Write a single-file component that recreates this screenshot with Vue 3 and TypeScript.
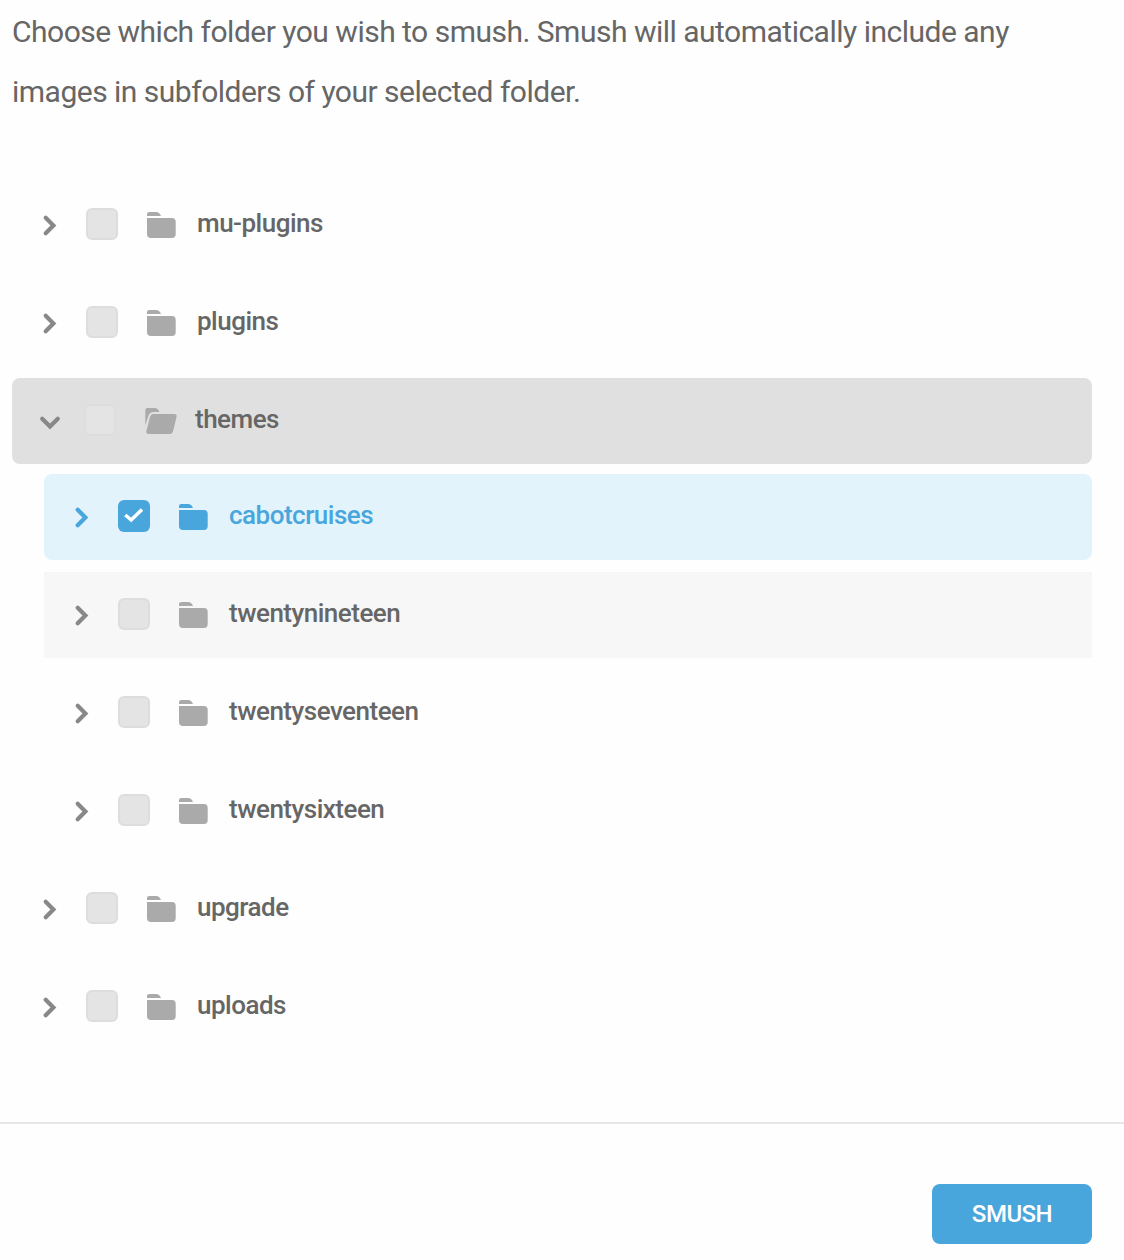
<script setup lang="ts">
import { ref } from 'vue'

interface Folder {
  name: string
  depth: number
  open?: boolean
  hovered?: boolean
}

const folders: Folder[] = [
  { name: 'mu-plugins', depth: 0 },
  { name: 'plugins', depth: 0 },
  { name: 'themes', depth: 0, open: true },
  { name: 'cabotcruises', depth: 1 },
  { name: 'twentynineteen', depth: 1, hovered: true },
  { name: 'twentyseventeen', depth: 1 },
  { name: 'twentysixteen', depth: 1 },
  { name: 'upgrade', depth: 0 },
  { name: 'uploads', depth: 0 },
]

const selected = ref('cabotcruises')
</script>

<template>
  <main class="dialog">
    <p class="description">
      Choose which folder you wish to smush. Smush will automatically include any images in subfolders of your selected folder.
    </p>

    <div class="tree" role="tree">
      <div
        v-for="folder in folders"
        :key="folder.name"
        class="row"
        :class="{
          child: folder.depth === 1,
          open: folder.open,
          hovered: folder.hovered,
          selected: selected === folder.name,
        }"
        role="treeitem"
        @click="selected = folder.name"
      >
        <svg class="chevron" viewBox="0 0 24 24">
          <path v-if="folder.open" d="M4.2 9.8 12 17.500 19.800 9.800" />
          <path v-else d="M7.700 4.700 15.400 12.500 7.700 20.300" />
        </svg>
        <span class="checkbox">
          <svg v-if="selected === folder.name" class="tick" viewBox="0 0 32 32">
            <path d="M7.300 15 13.200 20 24 9.600" />
          </svg>
        </span>
        <svg class="folder" viewBox="0 0 32 28">
          <template v-if="folder.open">
            <path d="M.300 18.500V3.200Q.300 1 2.500 1H9.500Q13 1 14.500 5H8.500Q4.500 5 3.500 8.500Z" />
            <path d="M8.300 7H29.500Q32.300 7 31.500 10L28 24.500Q27.300 27 24.500 27H3.500Q.700 27 1.400 24.300L5 10Q5.800 7 8.300 7Z" />
          </template>
          <template v-else>
            <path d="M2 5V3.200Q2 1 4.200 1H11Q14.500 1 16 5Z" />
            <path d="M2 7H27Q30.700 7 30.700 11V23Q30.700 27 27 27H6Q2 27 2 23Z" />
          </template>
        </svg>
        <span class="label">{{ folder.name }}</span>
      </div>
    </div>

    <footer class="footer">
      <button class="smush" type="button">SMUSH</button>
    </footer>
  </main>
</template>

<style>
body {
  background: #fefefe;
}
</style>

<style scoped>
.dialog {
  box-sizing: border-box;
  width: 1124px;
  height: 1260px;
  overflow: hidden;
  font-family: Roboto, sans-serif;
  color: #666;
}

.description {
  margin: 2px 32px 60px 12px;
  font-size: 30px;
  line-height: 60px;
  letter-spacing: -0.505px;
}

.tree {
  display: flex;
  flex-direction: column;
  gap: 12px;
  margin: 0 32px 0 12px;
}

.row {
  box-sizing: border-box;
  display: flex;
  align-items: flex-start;
  height: 86px;
  padding: 26px 0 0 26px;
  cursor: pointer;
}

.row.child {
  margin-left: 32px;
}

.row.hovered {
  background: #f7f7f7;
}

.row.open {
  margin-bottom: -2px;
  background: #e0e0e0;
  border-radius: 8px;
}

.row.selected {
  background: #e2f3fc;
  border-radius: 8px;
  color: #49a6dd;
}

.chevron {
  width: 24px;
  height: 24px;
  margin: 5px 24px 0 0;
  fill: none;
  stroke: #888;
  stroke-width: 4.200;
  stroke-linecap: round;
}

.open .chevron {
  margin-right: 22px;
}

.selected .chevron {
  stroke: #49a6dd;
}

.checkbox {
  box-sizing: border-box;
  width: 32px;
  height: 32px;
  margin-right: 27px;
  border: 2px solid #ddd;
  border-radius: 6px;
  background: #e4e4e4;
}

.open .checkbox {
  margin-right: 29px;
}

.selected .checkbox {
  border: 0;
  background: #49a6dd;
}

.tick {
  display: block;
  width: 32px;
  height: 32px;
  fill: none;
  stroke: #fff;
  stroke-width: 3.500;
}

.folder {
  width: 32px;
  height: 28px;
  margin: 3px 20px 0 0;
  fill: #aaa;
}

.open .folder {
  margin-right: 18px;
}

.selected .folder {
  fill: #49a6dd;
}

.label {
  font-size: 26px;
  font-weight: 500;
  line-height: 30px;
  letter-spacing: -0.5px;
}

.footer {
  display: flex;
  justify-content: flex-end;
  margin-top: 72px;
  padding: 60px 32px 0 0;
  border-top: 2px solid #e6e6e6;
}

.smush {
  width: 160px;
  height: 60px;
  padding: 0;
  border: 0;
  border-radius: 8px;
  background: #49a6dd;
  color: #fff;
  font: 500 24px/30px Roboto, sans-serif;
  letter-spacing: -0.5px;
}
</style>
